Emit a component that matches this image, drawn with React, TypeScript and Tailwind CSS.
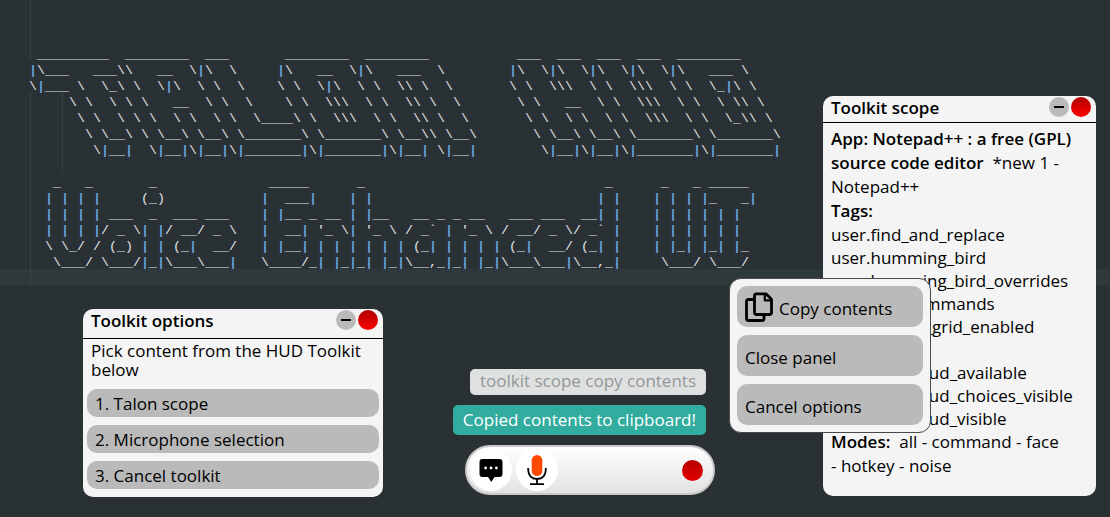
import type { ReactNode } from "react";

const BANNER = [
  String.raw` _________  ________  ___       ________  ________           ___  ___  ___  ___  ________`,
  String.raw`|\___   ___\\   __  \|\  \     |\   __  \|\   ___  \        |\  \|\  \|\  \|\  \|\   ___ \ `,
  String.raw`\|___ \  \_\ \  \|\  \ \  \    \ \  \|\  \ \  \\ \  \       \ \  \\\  \ \  \\\  \ \  \_|\ \ `,
  String.raw`     \ \  \ \ \   __  \ \  \    \ \  \\\  \ \  \\ \  \       \ \   __  \ \  \\\  \ \  \ \\ \ `,
  String.raw`      \ \  \ \ \  \ \  \ \  \____\ \  \\\  \ \  \\ \  \       \ \  \ \  \ \  \\\  \ \  \_\\ \ `,
  String.raw`       \ \__\ \ \__\ \__\ \_______\ \_______\ \__\\ \__\       \ \__\ \__\ \_______\ \_______\ `,
  String.raw`        \|__|  \|__|\|__|\|_______|\|_______|\|__| \|__|        \|__|\|__|\|_______|\|_______|`,
  "",
  String.raw`   _   _       _              _____      _                              _      _   _ _____`,
  String.raw`  | | | |     (_)            |  ___|    | |                            | |    | | | |_   _|`,
  String.raw`  | | | | ___  _  ___ ___    | |__ _ __ | |__   __ _ _ __   ___ ___  __| |    | | | | | |`,
  String.raw`  | | | |/ _ \| |/ __/ _ \   |  __| '_ \| '_ \ / _${"`"} | '_ \ / __/ _ \/ _${"`"} |    | | | | | |`,
  String.raw`  \ \_/ / (_) | | (_|  __/   | |__| | | | | | | (_| | | | | (_|  __/ (_| |    | |_| |_| |_`,
  String.raw`   \___/ \___/|_|\___\___|   \____/_| |_|_| |_|\__,_|_| |_|\___\___|\__,_|     \___/ \___/`,
];

const TAGS = [
  "user.find_and_replace",
  "user.humming_bird",
  "user.humming_bird_overrides",
  "user.line_commands",
  "user.mouse_grid_enabled",
  "user.tabs",
  "user.talon_hud_available",
  "user.talon_hud_choices_visible",
  "user.talon_hud_visible",
];

const OPTIONS = ["1. Talon scope", "2. Microphone selection", "3. Cancel toolkit"];

const GUIDE = "w-px bg-[repeating-linear-gradient(to_bottom,#475256_0px_1px,transparent_1px_2px)]";

function BannerLine({ text }: { text: string }) {
  return (
    <span className="block h-4">
      {text.split(/(\|)/).map((part, i) =>
        part === "|" ? (
          <span key={i} className="font-bold text-[#62a0dc]">
            |
          </span>
        ) : (
          part
        ),
      )}
    </span>
  );
}

function Editor() {
  return (
    <main className="pt-[47px]">
      <pre className="-mb-0.5 pl-[29px] font-['Liberation_Mono',monospace] text-[10pt] leading-4 text-[#e0e2e4]">
        {BANNER.map((line, i) => (
          <BannerLine key={i} text={line} />
        ))}
      </pre>
      <div className="h-4 bg-[#2f393c]" />
      <div className={`absolute left-[30px] top-0 h-[60px] ${GUIDE}`} />
      <div className={`absolute left-[30px] top-[93px] h-48 ${GUIDE}`} />
      <div className={`absolute left-[62px] top-[93px] h-20 ${GUIDE}`} />
    </main>
  );
}

function Panel({ title, className, headerClass, children }: {
  title: string;
  className: string;
  headerClass: string;
  children: ReactNode;
}) {
  return (
    <section className={`absolute rounded-[10px] bg-[#f4f4f4] ${className}`}>
      <header className={`flex items-start border-b border-black pl-2 pr-[5px] ${headerClass}`}>
        <h2 className="grow text-[17px] font-semibold leading-6">{title}</h2>
        <div className="flex gap-0.5 pt-px">
          <button aria-label="Minimize" className="flex size-5 items-center justify-center rounded-full bg-[#bababa]">
            <span className="h-0.5 w-2.5 bg-black" />
          </button>
          <button aria-label="Close" className="size-5 rounded-full bg-linear-to-b from-[#b00000] to-[#ff0000]" />
        </div>
      </header>
      {children}
    </section>
  );
}

function CopyIcon() {
  return (
    <svg viewBox="0 0 28 30" className="h-[30px] w-7 shrink-0" fill="none" stroke="#000" strokeWidth="2.8" strokeLinejoin="round">
      <path d="M9.5 7.5H3.5Q1.5 7.5 1.5 9.5V26.5Q1.5 28.5 3.5 28.5H17Q19 28.5 19 26.5V22.5" />
      <path d="M11.5 1.8H21L26.5 7.3V20.5Q26.5 22.5 24.5 22.5H11.5Q9.5 22.5 9.5 20.5V3.8Q9.5 1.8 11.5 1.8Z" />
      <path d="M19.8 2V8.4H26.3" strokeWidth="2.2" />
    </svg>
  );
}

function SpeechIcon() {
  return (
    <svg viewBox="0 0 24 24" className="size-6">
      <path d="M3.5 1H20.5Q23.5 1 23.5 4V16Q23.5 19 20.5 19H15.5L12.3 24L9 19H3.5Q.5 19 .5 16V4Q.5 1 3.5 1Z" fill="#000" />
      <circle cx="6.6" cy="10" r="1.4" fill="#fff" />
      <circle cx="12" cy="10" r="1.4" fill="#fff" />
      <circle cx="17.4" cy="10" r="1.4" fill="#fff" />
    </svg>
  );
}

function MicIcon() {
  return (
    <svg viewBox="0 0 20 32" className="h-8 w-5">
      <rect x="4.7" y="1" width="10.6" height="21" rx="5.3" fill="#ff4800" />
      <path d="M1.2 14V16Q1.6 24.8 10 25Q18.4 24.8 18.8 16V14M10 25V30M3 30.2H17" fill="none" stroke="#000" strokeWidth="1.8" />
    </svg>
  );
}

const MENU_BUTTON = "flex h-[41px] items-center gap-1.5 rounded-[10px] bg-[#bababa] px-2 pt-1 text-left";

export default function App() {
  return (
    <div className="relative min-h-screen overflow-hidden bg-[#293134] font-['Open_Sans',sans-serif] text-[17px] text-black">
      <Editor />

      <Panel title="Toolkit options" className="left-[83px] top-[309px] w-[300px] pb-2" headerClass="h-[30px]">
        <p className="pl-2 pr-1 pt-0.5 leading-[19px]">Pick content from the HUD Toolkit below</p>
        <div className="flex flex-col gap-2 px-1 pt-2.5">
          {OPTIONS.map((label) => (
            <button key={label} className="h-7 rounded-[10px] bg-[#bababa] px-2 pt-0.5 text-left leading-6">
              {label}
            </button>
          ))}
        </div>
      </Panel>

      <div className="absolute left-[445px] top-[369px] flex w-[270px] flex-col items-end whitespace-nowrap">
        <p className="mr-[9px] h-[26px] rounded-[5px] bg-[#dfe1e1] px-2.5 leading-6 text-[#949797]">toolkit scope copy contents</p>
        <p className="mr-[9px] mt-2.5 h-[30px] rounded-[5px] bg-[#31ac9e] px-2.5 leading-[30px] text-white">Copied contents to clipboard!</p>
        <div className="mt-2.5 flex h-[50px] w-[250px] items-center rounded-full border-2 border-[#c9c9c9] bg-linear-to-b from-white to-[#e2e2e2] pl-[3px] pr-2.5">
          <button aria-label="Speech" className="flex size-[42px] items-center justify-center rounded-full bg-white">
            <SpeechIcon />
          </button>
          <button aria-label="Microphone" className="ml-1 flex size-[42px] items-center justify-center rounded-full bg-white">
            <MicIcon />
          </button>
          <button aria-label="Stop" className="ml-auto size-[21px] rounded-full bg-linear-to-b from-[#b80000] to-[#e40000]" />
        </div>
      </div>

      <Panel title="Toolkit scope" className="left-[823px] top-[96px] w-[273px] pb-[18px]" headerClass="h-[27px]">
        <div className="px-2 pt-1">
          <p className="leading-6">
            <b className="font-semibold">App: Notepad++ : a free (GPL) source code editor</b>&nbsp; *new 1 - Notepad++
          </p>
          <h3 className="font-semibold leading-6">Tags:</h3>
          <ul className="leading-[23px]">
            {TAGS.map((tag) => (
              <li key={tag}>{tag}</li>
            ))}
          </ul>
          <p className="pr-6 leading-6">
            <b className="font-semibold">Modes:</b>&nbsp; all - command - face - hotkey - noise
          </p>
        </div>
      </Panel>

      <div className="absolute left-[729px] top-[278px] flex w-[202px] flex-col gap-2 rounded-xl border border-[#4a4a4a] bg-[#f4f4f4] p-[7px]">
        <button className={MENU_BUTTON}>
          <span className="-mt-1">
            <CopyIcon />
          </span>
          Copy contents
        </button>
        <button className={MENU_BUTTON}>Close panel</button>
        <button className={MENU_BUTTON}>Cancel options</button>
      </div>
    </div>
  );
}
